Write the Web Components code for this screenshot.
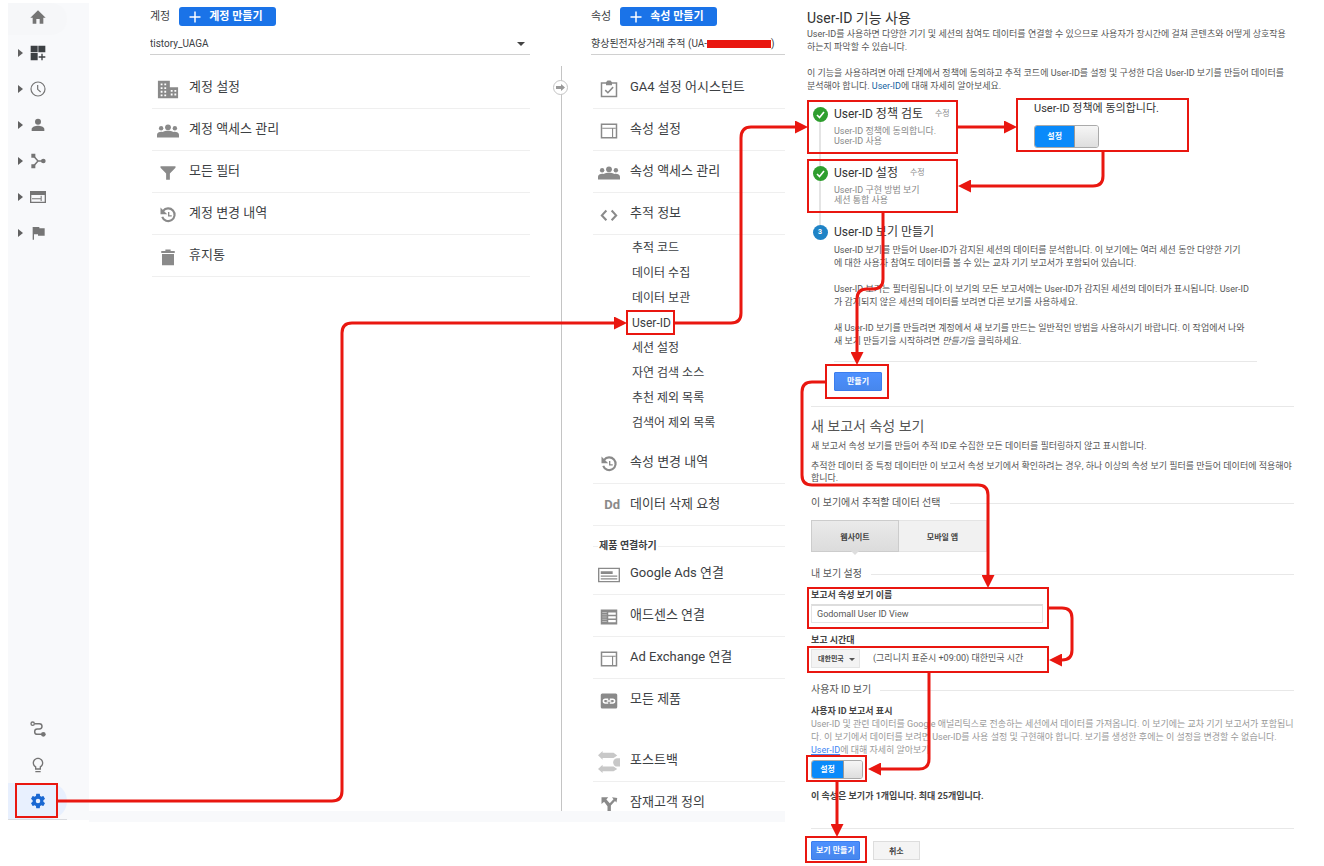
<!DOCTYPE html>
<html lang="ko">
<head>
<meta charset="utf-8">
<title>User-ID 설정</title>
<style>
  body {
    margin: 0;
    background: #fff;
    color: #3c4043;
    font-family: Roboto, "Noto Sans CJK KR", sans-serif;
  }
</style>
</head>
<body>
<admin-guide></admin-guide>

<script>
const ICONS = {
  home: '<path d="M9.500 22v-7h5v7h5.500v-9h3.500L12 2 .5 13H4v9z"/>',
  dashboard: '<path d="M1 1h10.500v10H1zM12.500 1H23v10H12.500zM1 12h10.500v11H1zM19 13h-2v4h-4v2h4v4h2v-4h4v-2h-4z"/>',
  clock: '<circle cx="12" cy="12" r="10.500" fill="none" stroke="currentColor" stroke-width="1.800"/><path d="M11.500 6v6.500l4.500 4" fill="none" stroke="currentColor" stroke-width="1.800"/>',
  person: '<circle cx="12" cy="7" r="4.500"/><path d="M12 13c-3.500 0-9.500 1.700-9.500 5v3h19v-3c0-3.300-6-5-9.500-5z"/>',
  nodes: '<path d="M2 1h6v6H2zM2 17h6v6H2z"/><circle cx="20" cy="12" r="3.500"/><path d="M5 4l7 8-7 8M12 12h7" fill="none" stroke="currentColor" stroke-width="2.200"/>',
  web: '<path d="M0 3h24v18H0zM2 9v10h20V9z" fill-rule="evenodd"/><path d="M3 14h13v1.500H3zM16 10h1.500v8H16z"/>',
  flag: '<path d="M14 5V3H4v19h2v-8h6v2h10V5z"/>',
  route: '<circle cx="4" cy="4" r="2.500" fill="none" stroke="currentColor" stroke-width="2"/><circle cx="20" cy="20" r="3.500"/><path d="M7 4h7a4 4 0 0 1 0 8h-3a4 4 0 0 0 0 8h7" fill="none" stroke="currentColor" stroke-width="2.200"/>',
  bulb: '<path d="M8 21h8v2H8zM12 1C7.500 1 4 4.500 4 9c0 2.600 1.300 5 3.500 6.500V19h9v-3.500C18.700 14 20 11.600 20 9c0-4.500-3.500-8-8-8zm2.500 13.200V17h-5v-2.800C7.400 13.200 6 11.400 6 9c0-3.400 2.600-6 6-6s6 2.600 6 6c0 2.400-1.400 4.200-3.500 5.200z"/>',
  gear: '<path d="M19.140 12.940c.04-.3.06-.61.06-.94 0-.32-.02-.64-.07-.94l2.030-1.580c.18-.14.23-.41.12-.61l-1.920-3.320c-.12-.22-.37-.29-.59-.22l-2.390.96c-.5-.38-1.030-.7-1.620-.94l-.36-2.540c-.04-.24-.24-.41-.48-.41h-3.840c-.24 0-.43.17-.47.41l-.36 2.540c-.59.24-1.130.57-1.620.94l-2.390-.96c-.22-.08-.47 0-.59.22L2.740 8.870c-.12.21-.08.47.12.61l2.030 1.580c-.05.3-.09.63-.09.94s.02.64.07.94l-2.030 1.580c-.18.14-.23.41-.12.61l1.920 3.320c.12.22.37.29.59.22l2.390-.96c.5.38 1.030.7 1.620.94l.36 2.540c.05.24.24.41.48.41h3.840c.24 0 .44-.17.47-.41l.36-2.540c.59-.24 1.130-.56 1.620-.94l2.390.96c.22.08.47 0 .59-.22l1.920-3.320c.12-.22.07-.47-.12-.61zM12 15a3 3 0 1 1 0-6 3 3 0 0 1 0 6z"/>',
  plus: '<path d="M10.500 1h3v9.500H23v3h-9.500V23h-3v-9.500H1v-3h9.500z"/>',
  building: '<path fill-rule="evenodd" d="M1 3h13v7h9v12H1zM4 6v2h2V6zM8 6v2h2V6zM4 10v2h2v-2zM8 10v2h2v-2zM4 14v2h2v-2zM8 14v2h2v-2zM4 18v2h2v-2zM8 18v2h2v-2zM15 13v2h2v-2zM19 13v2h2v-2zM15 17v2h2v-2zM19 17v2h2v-2z"/>',
  group: '<circle cx="12" cy="8" r="3.200"/><circle cx="4.500" cy="9" r="2.400"/><circle cx="19.500" cy="9" r="2.400"/><path d="M0 19v-3c0-2 3-3.500 6-3 1.500-.8 4-1.300 6-1.300s4.500.5 6 1.300c3-.5 6 1 6 3v3z"/>',
  filter: '<path d="M2 3h20v2l-7.500 7.500V21h-5v-8.500L2 5z"/>',
  history: '<path d="M5.500 6.500a8.500 8.500 0 1 1-1.200 8" fill="none" stroke="currentColor" stroke-width="2.800"/><path d="M2 2v9h9zM12 8v6h5v-1.800h-3.200V8z"/>',
  trash: '<path d="M4 8h16v15H4zM3 4h5.500V2h7v2H21v2.500H3z"/>',
  clipboard: '<path fill-rule="evenodd" d="M1 3h7l2-2.500h4L16 3h7v20H1zM3 5v16h18V5zM8 5v2h8V5z"/><path d="M7 13.500l3.500 3.500 7-7.500" fill="none" stroke="currentColor" stroke-width="2"/>',
  layout: '<path fill-rule="evenodd" d="M1 2h22v20H1zM3 4v16h18V4z"/><path d="M3 7.500h18V9H3zM16 9h1.500v11H16z"/>',
  code: '<path d="M8.500 6L2.500 12.500l6 6.500M15.500 6l6 6.500-6 6.500" fill="none" stroke="currentColor" stroke-width="2.800"/>',
  ads: '<path fill-rule="evenodd" d="M0 4h24v16H0zM1.500 5.500v13h21v-13z"/><path d="M3 8h13v3H3zM3 12.500h18V14H3zM3 15.500h18V17H3z"/>',
  adsense: '<path fill-rule="evenodd" d="M1 2h22v20H1zM11 6v3h10V6zM11 11v3h10v-3zM11 16v3h10v-3z"/><path d="M3 6h6M3 9h6M3 12h6M3 15h6M3 18h6" stroke="#ccc"/>',
  link: '<path d="M3 2h18a2 2 0 0 1 2 2v16a2 2 0 0 1-2 2H3a2 2 0 0 1-2-2V4a2 2 0 0 1 2-2z"/><g fill="none" stroke="#fff" stroke-width="2"><path d="M11 14.500H7a2.500 2.500 0 0 1 0-5h4M13 9.500h4a2.500 2.500 0 0 1 0 5h-4M9 12h6"/></g>',
  postback: '<g fill="#c8c8c8"><path d="M0 4.500L5 0v2h12l4 3-4 2.500H5v2z"/><path d="M0 19.500L5 15v2h12l4 2.500-4 2.500H5v2z"/><path d="M24 8h-3a4 4 0 0 0 0 9h3z"/></g>',
  fork: '<path d="M2 3h9L8.500 6l4.500 5 5-5.500L16 3l7 1-1 6-2-2-5.500 6V24H10v-9L5.500 9 2 12z"/>',
};

function define(name, html) {
  const template = document.createElement('template');
  template.innerHTML = html;
  customElements.define(name, class extends HTMLElement {
    constructor() {
      super();
      this.attachShadow({mode: 'open'}).appendChild(template.content.cloneNode(true));
    }
  });
}

class GaIcon extends HTMLElement {
  constructor() {
    super();
    this.attachShadow({mode: 'open'});
  }

  connectedCallback() {
    const size = this.getAttribute('size') || 16;
    this.shadowRoot.innerHTML = `
      <style>
        :host { display: block; flex: none; }
        svg { display: block; margin: 0 auto; fill: currentColor; }
      </style>
      <svg width="${size}" height="${size}" viewBox="0 0 24 24" aria-hidden="true">${ICONS[this.getAttribute('name')]}</svg>
    `;
  }
}
customElements.define('ga-icon', GaIcon);

class RailItem extends HTMLElement {
  constructor() {
    super();
    this.attachShadow({mode: 'open'});
  }

  connectedCallback() {
    const arrow = this.hasAttribute('expandable') ? '<i></i>' : '';
    const size = this.getAttribute('size') || 16;
    this.shadowRoot.innerHTML = `
      <style>
        :host { display: block; color: #757575; }
        :host([dark]) { color: #3c4043; }
        a {
          display: grid;
          grid-template-columns: 5px 18px;
          column-gap: 6px;
          align-items: center;
          height: 36px;
          padding-left: 10px;
          color: inherit;
        }
        i {
          border: 4px solid transparent;
          border-left: 5px solid #616161;
          border-right: 0;
        }
        ga-icon { grid-column: 2; }
        :host([first]) a {
          height: 28px;
          margin-right: 22px;
          padding-bottom: 4px;
          border-radius: 0 16px 16px 0;
          background: #f6f7f9;
        }
        :host([selected]) { border-bottom: 1px solid #dadce0; margin-right: 22px; }
        :host([selected]) a {
          border-radius: 0 18px 18px 0;
          background: #e8f0fe;
          color: #1967d2;
        }
      </style>
      <a href="#" aria-label="${this.getAttribute('label')}">${arrow}<ga-icon name="${this.getAttribute('icon')}" size="${size}"></ga-icon></a>
    `;
  }
}
customElements.define('rail-item', RailItem);

define('side-rail', `
  <style>
    :host {
      display: flex;
      flex-direction: column;
      justify-content: space-between;
      background: #f8f9fb;
    }
  </style>
  <nav aria-label="보고서">
    <rail-item first icon="home" label="홈"></rail-item>
    <rail-item expandable dark icon="dashboard" label="맞춤설정"></rail-item>
    <rail-item expandable icon="clock" label="실시간"></rail-item>
    <rail-item expandable icon="person" label="잠재고객"></rail-item>
    <rail-item expandable icon="nodes" label="획득"></rail-item>
    <rail-item expandable icon="web" label="행동"></rail-item>
    <rail-item expandable icon="flag" label="전환"></rail-item>
  </nav>
  <nav aria-label="도구">
    <rail-item icon="route" label="기여"></rail-item>
    <rail-item icon="bulb" label="탐색"></rail-item>
    <rail-item selected icon="gear" size="18" label="관리"></rail-item>
  </nav>
`);

// Column head: label, create button and the slotted picker below
define('column-head', `
  <style>
    :host { display: block; padding-top: 7px; }
    .top {
      display: flex;
      align-items: center;
      gap: 9px;
      font-size: 11px;
      line-height: 19px;
    }
    button {
      display: flex;
      align-items: center;
      gap: 8px;
      height: 19px;
      padding: 0 13px 0 10px;
      border: 0;
      border-radius: 3px;
      background: #1a73e8;
      color: #fff;
      font: bold 11px/19px Roboto, "Noto Sans CJK KR", sans-serif;
      white-space: nowrap;
    }
    .picker { margin-top: 8px; border-bottom: 1px solid #d0d0d0; }
  </style>
  <div class="top">
    <span><slot name="label"></slot></span>
    <button type="button"><ga-icon name="plus" size="12"></ga-icon><slot name="action"></slot></button>
  </div>
  <div class="picker"><slot></slot></div>
`);

class MenuRow extends HTMLElement {
  constructor() {
    super();
    this.attachShadow({mode: 'open'});
  }

  connectedCallback() {
    const icon = this.getAttribute('icon');
    const size = this.getAttribute('size') || 18;
    this.shadowRoot.innerHTML = `
      <style>
        :host { display: block; margin-left: 2px; border-bottom: 1px solid #efefef; }
        :host([plain]) { border-color: transparent; }
        a {
          display: grid;
          grid-template-columns: 22px 1fr;
          column-gap: 10px;
          align-items: center;
          height: 41px;
          padding-left: 5px;
          color: #3c4043;
          font-size: 13px;
          line-height: 18px;
          text-decoration: none;
          white-space: nowrap;
        }
        ga-icon, b { color: #8a8a8a; }
        ga-icon { padding-top: 2px; }
        b { text-align: right; }
        span { padding-bottom: 2px; }
      </style>
      <a href="#">${icon ? `<ga-icon name="${icon}" size="${size}"></ga-icon>` : '<b>Dd</b>'}<span><slot></slot></span></a>
    `;
  }
}
customElements.define('menu-row', MenuRow);

define('account-column', `
  <style>
    :host { display: block; }
    select {
      appearance: none;
      display: block;
      width: 100%;
      height: 20px;
      padding: 0;
      border: 0;
      background: none;
      color: #3c4043;
      font: 10px/20px Roboto, "Noto Sans CJK KR", sans-serif;
    }
    .pick { display: grid; grid-template-columns: 1fr 13px; align-items: center; }
    i {
      width: 0;
      border: 4px solid transparent;
      border-top-color: #444;
      border-bottom: 0;
    }
    .list { margin-top: 12px; }
  </style>
  <column-head>
    <span slot="label">계정</span>
    <span slot="action">계정 만들기</span>
    <div class="pick">
      <select aria-label="계정"><option>tistory_UAGA</option></select>
      <i></i>
    </div>
  </column-head>
  <div class="list">
    <menu-row icon="building" size="22">계정 설정</menu-row>
    <menu-row icon="group" size="22">계정 액세스 관리</menu-row>
    <menu-row icon="filter">모든 필터</menu-row>
    <menu-row icon="history">계정 변경 내역</menu-row>
    <menu-row icon="trash">휴지통</menu-row>
  </div>
`);

define('column-divider', `
  <style>
    :host {
      display: flex;
      justify-content: center;
      background: linear-gradient(#c4c4c4, #c4c4c4) 8px 0 / 1px 100% no-repeat;
    }
    button {
      display: grid;
      place-items: center;
      width: 15px;
      height: 15px;
      margin-top: 14px;
      padding: 0;
      border: 1px solid #c4c4c4;
      border-radius: 50%;
      background: #fff;
    }
  </style>
  <button type="button" aria-label="열 이동">
    <svg width="9" height="7" viewBox="0 0 9 7"><path d="M0 2h5V0l4 3.500L5 7V5H0z" fill="#999"/></svg>
  </button>
`);

define('property-column', `
  <style>
    :host { display: block; }
    .pick {
      display: flex;
      align-items: center;
      width: 100%;
      height: 20px;
      padding: 0;
      border: 0;
      background: none;
      color: #3c4043;
      font: 10px/20px Roboto, "Noto Sans CJK KR", sans-serif;
      white-space: nowrap;
    }
    .mask { flex: none; width: 64px; height: 8px; background: #e91710; }
    .list { margin-top: 12px; }
    ul { margin: 0; padding: 1px 0 6px 41px; list-style: none; }
    li a {
      display: block;
      color: #3c4043;
      font-size: 12px;
      line-height: 25px;
      text-decoration: none;
    }
    h3 {
      display: flex;
      align-items: center;
      gap: 1px;
      margin: 0 0 0 2px;
      padding-top: 13px;
      font-size: 10px;
      line-height: 14px;
    }
    h3::before, h3::after { content: ""; height: 1px; background: #efefef; }
    h3::before { width: 5px; }
    h3::after { flex: 1; }
    .more { padding-top: 19px; }
  </style>
  <column-head>
    <span slot="label">속성</span>
    <span slot="action">속성 만들기</span>
    <button class="pick" type="button">향상된전자상거래 추적 (UA-<span class="mask"></span>)</button>
  </column-head>
  <div class="list">
    <menu-row icon="clipboard">GA4 설정 어시스턴트</menu-row>
    <menu-row icon="layout">속성 설정</menu-row>
    <menu-row icon="group" size="22">속성 액세스 관리</menu-row>
    <menu-row icon="code">추적 정보</menu-row>
    <ul>
      <li><a href="#">추적 코드</a></li>
      <li><a href="#">데이터 수집</a></li>
      <li><a href="#">데이터 보관</a></li>
      <li><a href="#">User-ID</a></li>
      <li><a href="#">세션 설정</a></li>
      <li><a href="#">자연 검색 소스</a></li>
      <li><a href="#">추천 제외 목록</a></li>
      <li><a href="#">검색어 제외 목록</a></li>
    </ul>
    <menu-row icon="history">속성 변경 내역</menu-row>
    <menu-row>데이터 삭제 요청</menu-row>
    <h3>제품 연결하기</h3>
    <menu-row icon="ads" size="22">Google Ads 연결</menu-row>
    <menu-row icon="adsense">애드센스 연결</menu-row>
    <menu-row icon="layout">Ad Exchange 연결</menu-row>
    <menu-row plain icon="link">모든 제품</menu-row>
    <div class="more">
      <menu-row icon="postback" size="22">포스트백</menu-row>
      <menu-row icon="fork">잠재고객 정의</menu-row>
    </div>
  </div>
`);

define('toggle-switch', `
  <style>
    :host { display: block; width: 65px; height: 23px; }
    label {
      position: relative;
      display: grid;
      grid-template-columns: 5fr 3fr;
      height: 100%;
      box-sizing: border-box;
      border: 1px solid #aaa;
      border-radius: 3px;
      overflow: hidden;
      color: #fff;
      font-size: 8px;
      font-weight: bold;
    }
    input { position: absolute; inset: 0; margin: 0; opacity: 0; }
    span { display: grid; place-items: center; background: #0a8afa; }
    i { border-left: 1px solid #999; background: linear-gradient(#f6f6f6, #dedede); }
  </style>
  <label><input type="checkbox" role="switch" checked><span>설정</span><i></i></label>
`);

class StepItem extends HTMLElement {
  constructor() {
    super();
    this.attachShadow({mode: 'open'});
  }

  connectedCallback() {
    const number = this.getAttribute('number');
    const edit = this.hasAttribute('done') ? '<a href="#">수정</a>' : '';
    const mark = this.hasAttribute('done')
      ? '<svg width="9" height="8" viewBox="0 0 9 8"><path d="M1 4l2.500 2.500L8 1" fill="none" stroke="#fff" stroke-width="1.600"/></svg>'
      : number;
    this.shadowRoot.innerHTML = `
      <style>
        :host {
          display: grid;
          grid-template-columns: 14px 1fr;
          column-gap: 7px;
          min-height: 59px;
        }
        .mark { display: flex; flex-direction: column; align-items: center; }
        .dot {
          display: grid;
          place-items: center;
          width: 15px;
          height: 15px;
          border-radius: 50%;
          background: #1f83c6;
          color: #fff;
          font-size: 7px;
          font-weight: bold;
        }
        :host([done]) .dot { background: #2e9e2e; }
        :host([done]) .mark::after { content: ""; flex: 1; width: 2px; background: #e4e4e4; }
        h3 {
          display: flex;
          align-items: center;
          gap: 12px;
          margin: 0 0 5px;
          color: #333;
          font-size: 12px;
          font-weight: normal;
          line-height: 14px;
        }
        a { color: #888; font-size: 8px; text-decoration: none; }
        .text { color: #888; font-size: 9px; line-height: 10px; white-space: nowrap; }
      </style>
      <div class="mark"><span class="dot">${mark}</span></div>
      <div>
        <h3><slot name="title"></slot>${edit}</h3>
        <div class="text"><slot></slot></div>
      </div>
    `;
  }
}
customElements.define('step-item', StepItem);

define('section-title', `
  <style>
    :host { display: flex; align-items: center; gap: 9px; }
    :host::after { content: ""; flex: 1; height: 1px; background: #e8e8e8; }
    h3 { margin: 0; color: #555; font-size: 10px; font-weight: normal; line-height: 14px; }
  </style>
  <h3><slot></slot></h3>
`);

define('userid-setup', `
  <style>
    :host { display: block; color: #555; font-size: 9px; line-height: 13px; }
    h1, h2, p { margin: 0; font-weight: normal; }
    h1 { color: #333; font-size: 14px; line-height: 20px; }
    p { white-space: nowrap; }
    p + p { margin-top: 13px; }
    a { color: #15629f; text-decoration: none; }
    button, select, input { font-family: Roboto, "Noto Sans CJK KR", sans-serif; }
    .steps { display: flex; padding-left: 6px; }
    .list { width: 221px; padding-top: 14px; }
    .policy { padding-top: 9px; color: #333; font-size: 11px; line-height: 14px; }
    .policy toggle-switch { margin-top: 9px; }
    .third { margin-left: 6px; }
    .third p { color: #555; line-height: 13px; }
    .blue {
      height: 19px;
      padding: 0 12px;
      border: 1px solid #3b7ded;
      border-radius: 1px;
      background: linear-gradient(#4d90fe, #4787ed);
      color: #fff;
      font-size: 8px;
      font-weight: bold;
      line-height: 17px;
      white-space: nowrap;
    }
    .create { margin: 13px 37px 0 27px; padding-top: 10px; border-top: 1px solid #e8e8e8; line-height: 0; }
    form { margin: 15px 0 0 4px; border-top: 1px solid #e8e8e8; }
    h2 { margin: 11px 0 6px; color: #555; font-size: 14px; line-height: 16px; }
    form p { line-height: 12px; }
    form p + p { margin-top: 8px; }
    section-title { margin-top: 12px; }
    .tabs { display: flex; margin-top: 10px; }
    .tabs button {
      width: 88px;
      height: 32px;
      border: 1px solid #e4e4e4;
      background: #f1f1f1;
      color: #444;
      font-size: 8px;
      font-weight: bold;
    }
    .tabs button + button { border-left: 0; }
    .tabs .on { position: relative; border-color: #ccc; background: linear-gradient(#eaeaea, #dcdcdc); }
    .tabs .on::after {
      content: "";
      position: absolute;
      top: 100%;
      left: 50%;
      margin-left: -4px;
      border: 4px solid transparent;
      border-top-color: #ddd;
      border-bottom: 0;
    }
    .settings { margin-top: 15px; }
    label.field, strong { display: block; color: #444; font-weight: bold; line-height: 12px; }
    .name { margin-top: 8px; }
    .name input {
      display: block;
      box-sizing: border-box;
      width: 232px;
      height: 19px;
      margin-top: 3px;
      padding: 0 5px;
      border: 1px solid #e4e4e4;
      border-top: 2px solid #ddd;
      color: #555;
      font-size: 9px;
    }
    .zone { margin-top: 11px; }
    .zone div { display: flex; gap: 13px; margin-top: 3px; line-height: 18px; }
    .drop { position: relative; }
    select {
      appearance: none;
      display: block;
      width: 49px;
      height: 19px;
      padding: 0 6px;
      border: 1px solid #e4e4e4;
      background: #f3f3f3;
      color: #444;
      font-size: 7px;
      font-weight: bold;
    }
    .drop i {
      position: absolute;
      top: 9px;
      right: 5px;
      border: 3px solid transparent;
      border-top-color: #555;
      border-bottom: 0;
    }
    .view { margin-top: 15px; }
    .show { margin: 8px 0 1px; }
    form .help { color: #999; line-height: 13px; }
    .help a { color: #4285f4; text-decoration: underline; }
    form toggle-switch { width: 52px; height: 19px; margin-top: 3px; }
    .count { margin-top: 11px; }
    .actions { display: flex; gap: 13px; margin-top: 26px; padding-top: 12px; border-top: 1px solid #e8e8e8; }
    .actions .blue { padding: 0 4px; }
    .plain {
      width: 47px;
      height: 19px;
      border: 1px solid #ddd;
      background: #f4f4f4;
      color: #444;
      font-size: 8px;
      font-weight: bold;
    }
  </style>
  <h1>User-ID 기능 사용</h1>
  <p>User-ID를 사용하면 다양한 기기 및 세션의 참여도 데이터를 연결할 수 있으므로 사용자가 장시간에 걸쳐 콘텐츠와 어떻게 상호작용<br>하는지 파악할 수 있습니다.</p>
  <p>이 기능을 사용하려면 아래 단계에서 정책에 동의하고 추적 코드에 User-ID를 설정 및 구성한 다음 User-ID 보기를 만들어 데이터를<br>분석해야 합니다. <a href="#">User-ID</a>에 대해 자세히 알아보세요.</p>
  <div class="steps">
    <div class="list">
      <step-item done>
        <span slot="title">User-ID 정책 검토</span>
        User-ID 정책에 동의합니다.<br>User-ID 사용
      </step-item>
      <step-item done>
        <span slot="title">User-ID 설정</span>
        User-ID 구현 방법 보기<br>세션 통합 사용
      </step-item>
    </div>
    <div class="policy">
      User-ID 정책에 동의합니다.
      <toggle-switch></toggle-switch>
    </div>
  </div>
  <step-item class="third" number="3">
    <span slot="title">User-ID 보기 만들기</span>
    <p>User-ID 보기를 만들어 User-ID가 감지된 세션의 데이터를 분석합니다. 이 보기에는 여러 세션 동안 다양한 기기<br>에 대한 사용자 참여도 데이터를 볼 수 있는 교차 기기 보고서가 포함되어 있습니다.</p>
    <p>User-ID 보기는 필터링됩니다.이 보기의 모든 보고서에는 User-ID가 감지된 세션의 데이터가 표시됩니다. User-ID<br>가 감지되지 않은 세션의 데이터를 보려면 다른 보기를 사용하세요.</p>
    <p>새 User-ID 보기를 만들려면 계정에서 새 보기를 만드는 일반적인 방법을 사용하시기 바랍니다. 이 작업에서 나와<br>새 보기 만들기을 시작하려면 <em>만들기</em>을 클릭하세요.</p>
  </step-item>
  <div class="create"><button class="blue" type="button">만들기</button></div>
  <form>
    <h2>새 보고서 속성 보기</h2>
    <p>새 보고서 속성 보기를 만들어 추적 ID로 수집한 모든 데이터를 필터링하지 않고 표시합니다.</p>
    <p>추적한 데이터 중 특정 데이터만 이 보고서 속성 보기에서 확인하려는 경우, 하나 이상의 속성 보기 필터를 만들어 데이터에 적용해야<br>합니다.</p>
    <section-title>이 보기에서 추적할 데이터 선택</section-title>
    <div class="tabs">
      <button class="on" type="button">웹사이트</button>
      <button type="button">모바일 앱</button>
    </div>
    <section-title class="settings">내 보기 설정</section-title>
    <div class="name">
      <label class="field" for="name">보고서 속성 보기 이름</label>
      <input id="name" type="text" value="Godomall User ID View">
    </div>
    <div class="zone">
      <label class="field" for="zone">보고 시간대</label>
      <div>
        <span class="drop"><select id="zone"><option>대한민국</option></select><i></i></span>
        <span>(그리니치 표준시 +09:00) 대한민국 시간</span>
      </div>
    </div>
    <section-title class="view">사용자 ID 보기</section-title>
    <strong class="show">사용자 ID 보고서 표시</strong>
    <p class="help">User-ID 및 관련 데이터를 Google 애널리틱스로 전송하는 세션에서 데이터를 가져옵니다. 이 보기에는 교차 기기 보고서가 포함됩니<br>다. 이 보기에서 데이터를 보려면 User-ID를 사용 설정 및 구현해야 합니다. 보기를 생성한 후에는 이 설정을 변경할 수 없습니다.<br><a href="#">User-ID</a>에 대해 자세히 알아보기</p>
    <toggle-switch></toggle-switch>
    <strong class="count">이 속성은 보기가 1개입니다. 최대 25개입니다.</strong>
    <div class="actions">
      <button class="blue" type="button">보기 만들기</button>
      <button class="plain" type="button">취소</button>
    </div>
  </form>
`);

// Red frames and arrows drawn over the screens
define('flow-arrows', `
  <style>
    :host { position: absolute; top: 0; left: 0; pointer-events: none; }
    svg { display: block; }
  </style>
  <svg width="1200" height="866" viewBox="0 0 1200 866" fill="none" stroke="#e91710">
    <defs>
      <marker id="head" markerUnits="userSpaceOnUse" markerWidth="13" markerHeight="13" refX="0" refY="6.500" orient="auto">
        <path d="M0 0l13 6.500L0 13z" fill="#e91710" stroke="none"/>
      </marker>
    </defs>
    <g stroke-width="2">
      <rect x="16" y="784" width="41" height="33"/>
      <rect x="627" y="311" width="47" height="23"/>
      <rect x="808" y="101" width="149" height="52"/>
      <rect x="1017" y="99" width="171" height="52"/>
      <rect x="808" y="160" width="149" height="52"/>
      <rect x="826" y="365" width="62" height="33"/>
      <rect x="808" y="588" width="240" height="40"/>
      <rect x="808" y="647" width="240" height="25"/>
      <rect x="807" y="756" width="59" height="25"/>
      <rect x="806" y="837" width="60" height="25"/>
    </g>
    <g stroke-width="3">
      <path d="M58 801H332Q342 801 342 791V333Q342 323 352 323H614" marker-end="url(#head)"/>
      <path d="M675 323H731Q741 323 741 313V138Q741 127 751 127H795" marker-end="url(#head)"/>
      <path d="M957 127H1004" marker-end="url(#head)"/>
      <path d="M1103 152V176Q1103 186 1093 186H971" marker-end="url(#head)"/>
      <path d="M883 213V279Q883 289 873 289H867Q857 289 857 299V352" marker-end="url(#head)"/>
      <path d="M825 382H812Q802 382 802 392V475Q802 485 812 485H978Q988 485 988 495V575" marker-end="url(#head)"/>
      <path d="M1049 608H1062Q1072 608 1072 618V650Q1072 660 1062 660" marker-end="url(#head)"/>
      <path d="M929 673V759Q929 769 919 769H881" marker-end="url(#head)"/>
      <path d="M837 782V824" marker-end="url(#head)"/>
    </g>
  </svg>
`);

define('admin-guide', `
  <style>
    :host {
      position: relative;
      display: grid;
      grid-template-columns: 81px 696px 1fr;
      min-height: 100vh;
      padding-left: 8px;
      box-sizing: border-box;
      overflow: hidden;
    }
    side-rail { height: calc(100vh - 49px); margin-top: 3px; }
    .console {
      display: grid;
      grid-template-columns: 380px 15px 194px;
      justify-content: end;
      column-gap: 23px;
      height: calc(100vh - 55px);
      border-bottom: 11px solid #f8f9fb;
      overflow: hidden;
    }
    column-divider { margin-top: 66px; }
    userid-setup { padding: 8px 31px 3px 22px; }
  </style>
  <side-rail></side-rail>
  <main class="console">
    <account-column></account-column>
    <column-divider></column-divider>
    <property-column></property-column>
  </main>
  <userid-setup></userid-setup>
  <flow-arrows></flow-arrows>
`);
</script>
</body>
</html>
